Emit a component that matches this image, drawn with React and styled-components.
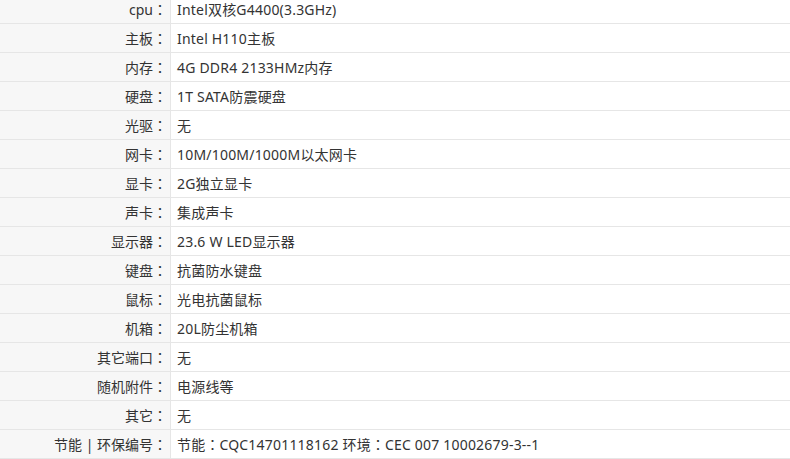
import React from "react";
import styled, { createGlobalStyle } from "styled-components";

const GlobalStyle = createGlobalStyle`
  html, body {
    margin: 0;
    padding: 0;
    background: #fff;
    overflow: hidden;
  }
`;

const Table = styled.div`
  margin-top: -5px;
  width: 790px;
  font-family: "Noto Sans", "Noto Sans CJK SC", sans-serif;
  font-size: 14px;
  color: #333;
`;

const Row = styled.div`
  display: grid;
  grid-template-columns: 171px 1fr;
  height: 28px;
  border-bottom: 1px solid #e6e6e6;
`;

const Label = styled.div`
  display: flex;
  align-items: center;
  justify-content: flex-end;
  padding-right: 3px;
  background: #f7f7f7;
  border-right: 1px solid #e6e6e6;
  white-space: pre;
`;

const Value = styled.div`
  display: flex;
  align-items: center;
  padding-left: 6px;
  letter-spacing: 0.2px;
  white-space: pre;
`;

const Colon = styled.span`
  font-family: "Noto Sans CJK TC", sans-serif;
  letter-spacing: 0;
`;

const specs = [
  ["cpu", "Intel双核G4400(3.3GHz)"],
  ["主板", "Intel H110主板"],
  ["内存", "4G DDR4 2133HMz内存"],
  ["硬盘", "1T SATA防震硬盘"],
  ["光驱", "无"],
  ["网卡", "10M/100M/1000M以太网卡"],
  ["显卡", "2G独立显卡"],
  ["声卡", "集成声卡"],
  ["显示器", "23.6 W LED显示器"],
  ["键盘", "抗菌防水键盘"],
  ["鼠标", "光电抗菌鼠标"],
  ["机箱", "20L防尘机箱"],
  ["其它端口", "无"],
  ["随机附件", "电源线等"],
  ["其它", "无"],
  ["节能 | 环保编号", ["节能", "CQC14701118162 环境", "CEC 007 10002679-3--1"]],
];

const App = () => {
  return (
    <>
      <GlobalStyle />
      <Table>
        {specs.map(([k, v]) => (
          <Row key={k}>
            <Label>
              {k}
              <Colon>：</Colon>
            </Label>
            <Value>
              {Array.isArray(v)
                ? v.map((part, i) => (
                    <React.Fragment key={i}>
                      {i > 0 && <Colon>：</Colon>}
                      {part}
                    </React.Fragment>
                  ))
                : v}
            </Value>
          </Row>
        ))}
      </Table>
    </>
  );
};

export default App;
